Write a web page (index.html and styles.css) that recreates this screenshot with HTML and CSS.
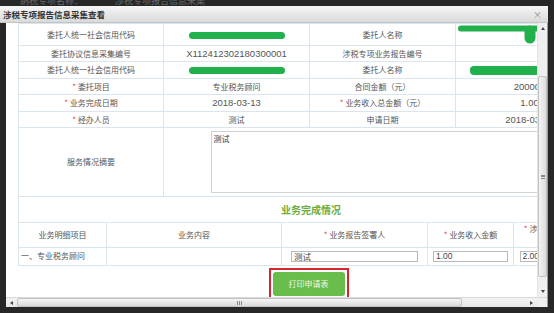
FILE: index.html
```html
<!DOCTYPE html>
<html lang="zh-CN">
<head>
    <meta charset="UTF-8">
    <meta name="viewport" content="width=device-width, initial-scale=1.0">
    <title>涉税专项报告信息采集查看</title>
    <link rel="stylesheet" href="styles.css">
</head>
<body>
    <div class="backdrop">
        <span>纳税专项名称：</span>
        <span>涉税专项报告信息采集</span>
    </div>

    <div class="dialog">
        <div class="dlg-title">
            <span>涉税专项报告信息采集查看</span>
            <span class="close">×</span>
        </div>

        <div class="dlg-body">
            <div class="view-row">
                <div class="viewport">
                    <div class="sheet">
                        <table class="info">
                            <colgroup>
                                <col class="w145"><col class="w146"><col class="w146"><col class="w147">
                            </colgroup>
                            <tr class="h22">
                                <td>委托人统一社会信用代码</td>
                                <td><span class="mark"></span></td>
                                <td>委托人名称</td>
                                <td class="blot">
                                    <svg width="90" height="20" viewBox="0 0 90 20">
                                        <path d="M3 3.5 H88" stroke="#21b04b" stroke-width="6" stroke-linecap="round" fill="none"/>
                                        <path d="M72 6 V13" stroke="#21b04b" stroke-width="11" stroke-linecap="round" fill="none"/>
                                    </svg>
                                </td>
                            </tr>
                            <tr class="h16">
                                <td>委托协议信息采集编号</td>
                                <td class="num">X112412302180300001</td>
                                <td>涉税专项业务报告编号</td>
                                <td></td>
                            </tr>
                            <tr class="h17">
                                <td>委托人统一社会信用代码</td>
                                <td><span class="mark"></span></td>
                                <td>委托人名称</td>
                                <td><span class="mark mark-wide"></span></td>
                            </tr>
                            <tr class="h16">
                                <td><i>*</i>委托项目</td>
                                <td>专业税务顾问</td>
                                <td>合同金额（元）</td>
                                <td class="num">200000</td>
                            </tr>
                            <tr class="h17">
                                <td><i>*</i>业务完成日期</td>
                                <td class="num">2018-03-13</td>
                                <td><i>*</i>业务收入总金额（元）</td>
                                <td class="num">1.00</td>
                            </tr>
                            <tr class="h16">
                                <td><i>*</i>经办人员</td>
                                <td>测试</td>
                                <td>申请日期</td>
                                <td class="num">2018-03-13</td>
                            </tr>
                            <tr class="h69">
                                <td>服务情况摘要</td>
                                <td colspan="3"><textarea class="memo" readonly>测试</textarea></td>
                            </tr>
                            <tr class="h26">
                                <td colspan="4" class="sec-title">业务完成情况</td>
                            </tr>
                        </table>

                        <table class="detail">
                            <colgroup>
                                <col class="w88"><col class="w175"><col class="w146"><col class="w86"><col class="w90">
                            </colgroup>
                            <tr class="h25">
                                <td>业务明细项目</td>
                                <td>业务内容</td>
                                <td><i>*</i>业务报告签署人</td>
                                <td><i>*</i>业务收入金额</td>
                                <td class="wrap"><i>*</i>涉税服务收费金额（元）</td>
                            </tr>
                            <tr class="h18">
                                <td class="left">一、专业税务顾问</td>
                                <td></td>
                                <td><input class="field f127" value="测试" readonly></td>
                                <td><input class="field f75" value="1.00" readonly></td>
                                <td><input class="field f78" value="2.00" readonly></td>
                            </tr>
                        </table>

                        <div class="actions">
                            <div class="highlight">
                                <button class="btn-print">打印申请表</button>
                            </div>
                        </div>
                    </div>
                </div>

                <div class="vscroll">
                    <div class="sb-btn"><span class="tri tri-up"></span></div>
                    <div class="sb-gap"></div>
                    <div class="thumb thumb-v"><span class="grip grip-v"></span></div>
                    <div class="sb-fill"></div>
                    <div class="sb-btn"><span class="tri tri-down"></span></div>
                </div>
            </div>

            <div class="hscroll">
                <div class="sb-btn"><span class="tri tri-left"></span></div>
                <div class="thumb thumb-h"><span class="grip grip-h"></span></div>
                <div class="sb-fill"></div>
                <div class="sb-btn"><span class="tri tri-right"></span></div>
                <div class="corner"></div>
            </div>
        </div>
    </div>
</body>
</html>
```

FILE: styles.css
```css
* {
    box-sizing: border-box;
}

body {
    margin: 0;
    width: 554px;
    height: 313px;
    overflow: hidden;
    background: #272727;
    font-family: "Noto Sans CJK SC", "Liberation Sans", sans-serif;
}

.backdrop {
    height: 6px;
    overflow: hidden;
    display: flex;
    gap: 32px;
    padding-left: 20px;
    color: #6a6a6a;
    font-size: 9px;
    line-height: 9px;
}

.backdrop span {
    margin-top: -4px;
}

.dialog {
    width: 548px;
    height: 301px;
    display: flex;
    flex-direction: column;
    background: #fff;
}

.dlg-title {
    height: 17px;
    flex: none;
    display: flex;
    align-items: center;
    justify-content: space-between;
    padding: 0 6px 0 3px;
    background: linear-gradient(#f6f6f6, #dadada);
    border-bottom: 1px solid #c4c4c4;
    color: #333;
    font-size: 8.5px;
    font-weight: bold;
}

.close {
    color: #8a8a8a;
    font-weight: normal;
    font-size: 9px;
}

.dlg-body {
    flex: 1;
    min-height: 0;
    display: flex;
    flex-direction: column;
    border-left: 6px solid #272727;
    border-right: 1px solid #9a9a9a;
}

.view-row {
    flex: 1;
    min-height: 0;
    display: flex;
}

.viewport {
    flex: 1;
    overflow: hidden;
}

.sheet {
    width: 600px;
    padding-left: 12px;
}

table {
    border-collapse: collapse;
    table-layout: fixed;
    width: 585px;
}

td {
    border: 1px solid #dbe5ed;
    padding: 0 2px;
    text-align: center;
    vertical-align: middle;
    color: #555;
    font-size: 8px;
    line-height: 10px;
    white-space: nowrap;
    overflow: hidden;
}

td i {
    font-style: normal;
    color: #e5393d;
    margin-right: 2px;
}

.w145 { width: 145px; }
.w146 { width: 146px; }
.w147 { width: 148px; }
.w88 { width: 88px; }
.w175 { width: 175px; }
.w86 { width: 86px; }
.w90 { width: 90px; }

.h16 { height: 16px; }
.h17 { height: 17px; }
.h18 { height: 18px; }
.h22 { height: 22px; }
.h25 { height: 25px; }
.h26 { height: 26px; }
.h69 { height: 69px; }

.num {
    font-family: "Liberation Sans", sans-serif;
    font-size: 9.5px;
}

.mark {
    display: inline-block;
    width: 96px;
    height: 7px;
    border-radius: 4px;
    background: #21b04b;
    vertical-align: middle;
}

.mark-wide {
    width: 120px;
    height: 9px;
}

.blot {
    vertical-align: top;
    text-align: left;
    padding: 1px 0 0 2px;
}

.blot svg {
    display: block;
}

.memo {
    display: block;
    width: 346px;
    height: 62px;
    margin: 0 auto;
    padding: 2px;
    border: 1px solid #d2d2d2;
    resize: none;
    font-family: "Noto Sans CJK SC", sans-serif;
    font-size: 8px;
    line-height: 10px;
    color: #333;
}

.sec-title {
    color: #6cae3e;
    font-size: 10px;
    font-weight: bold;
    border-bottom: none;
}

.detail {
    margin-top: -1px;
}

.detail .left {
    text-align: left;
    padding-left: 2px;
}

.detail .wrap {
    white-space: normal;
    vertical-align: top;
    padding: 1px 4px 0;
}

.field {
    display: block;
    margin: 0 auto;
    height: 11px;
    padding: 0 2px;
    border: 1px solid #b9b9b9;
    font-family: "Liberation Sans", "Noto Sans CJK SC", sans-serif;
    font-size: 8.5px;
    color: #444;
    background: #fff;
}

.f127 { width: 127px; }
.f75 { width: 75px; }
.f78 { width: 78px; }

.actions {
    width: 585px;
    display: flex;
    justify-content: center;
    padding: 2px 4px 0 0;
}

.highlight {
    border: 2px solid #d8262d;
    padding: 2px;
}

.btn-print {
    display: block;
    width: 72px;
    height: 24px;
    border: none;
    border-radius: 3px;
    background: #68bd4b;
    color: #eef8ea;
    font-family: "Noto Sans CJK SC", sans-serif;
    font-size: 8px;
}

.vscroll {
    width: 10px;
    flex: none;
    display: flex;
    flex-direction: column;
    background: #efefef;
    border-left: 1px solid #e4e4e4;
}

.hscroll {
    height: 10px;
    flex: none;
    display: flex;
    background: linear-gradient(#f2f2f2, #e6e6e6);
    border-top: 1px solid #d9d9d9;
}

.sb-btn {
    flex: none;
    width: 11px;
    height: 11px;
    display: flex;
    align-items: center;
    justify-content: center;
}

.vscroll .sb-btn {
    width: 9px;
}

.hscroll .sb-btn {
    height: 9px;
}

.sb-gap {
    height: 42px;
    flex: none;
}

.sb-fill {
    flex: 1;
}

.thumb {
    flex: none;
    display: flex;
    align-items: center;
    justify-content: center;
    border: 1px solid #c2c2c2;
    border-radius: 2px;
}

.thumb-v {
    height: 201px;
    background: linear-gradient(90deg, #f4f4f4, #dcdcdc);
}

.thumb-h {
    width: 445px;
    background: linear-gradient(#f6f6f6, #d9d9d9);
}

.grip-v {
    width: 4px;
    height: 4px;
    border-top: 1px solid #888;
    border-bottom: 1px solid #888;
    background: linear-gradient(#888, #888) center / 100% 1px no-repeat;
}

.grip-h {
    width: 5px;
    height: 4px;
    border-left: 1px solid #888;
    border-right: 1px solid #888;
    background: linear-gradient(#888, #888) center / 1px 100% no-repeat;
}

.tri {
    width: 0;
    height: 0;
    border: 2px solid transparent;
}

.tri-up { border-bottom: 3px solid #444; border-top-width: 0; }
.tri-down { border-top: 3px solid #444; border-bottom-width: 0; }
.tri-left { border-right: 3px solid #444; border-left-width: 0; }
.tri-right { border-left: 3px solid #444; border-right-width: 0; }

.corner {
    width: 10px;
    flex: none;
    background: #efefef;
}
```
